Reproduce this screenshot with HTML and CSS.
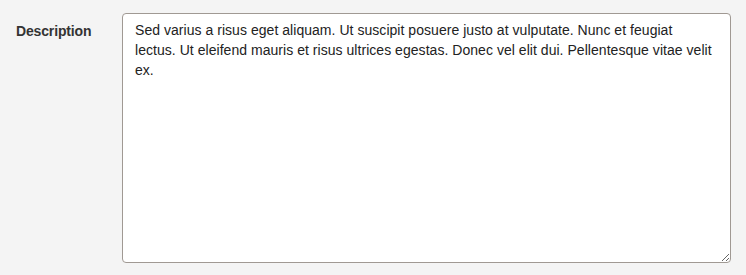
FILE: index.html
```html
<!DOCTYPE html>
<html>
<head>
<meta charset="utf-8">
<link rel="stylesheet" href="styles.css">
</head>
<body>
<form class="form">
  <div class="form-group">
    <label class="label" for="desc">Description</label>
    <textarea id="desc" class="field">Sed varius a risus eget aliquam. Ut suscipit posuere justo at vulputate. Nunc et feugiat
lectus. Ut eleifend mauris et risus ultrices egestas. Donec vel elit dui. Pellentesque vitae velit ex.</textarea>
  </div>
</form>
</body>
</html>
```

FILE: styles.css
```css
html, body {
  margin: 0;
  padding: 0;
  background: #f4f4f4;
}
body {
  font-family: "Liberation Sans", Arial, Helvetica, sans-serif;
  font-size: 14px;
  line-height: 20px;
  color: #333;
}
.form {
  padding: 13px 15px 0 16px;
}
.form-group {
  display: flex;
  align-items: flex-start;
}
.label {
  width: 106px;
  flex: none;
  font-weight: bold;
  padding-top: 8px;
  color: #333;
  letter-spacing: -0.15px;
}
.field {
  box-sizing: border-box;
  width: 609px;
  height: 250px;
  margin: 0;
  padding: 6px 12px;
  border: 1px solid #a09993;
  border-radius: 4px;
  background: #fff;
  font-family: "Liberation Sans", Arial, Helvetica, sans-serif;
  font-size: 14px;
  line-height: 20px;
  letter-spacing: 0.04px;
  color: #222;
  resize: vertical;
  outline: none;
}
```
